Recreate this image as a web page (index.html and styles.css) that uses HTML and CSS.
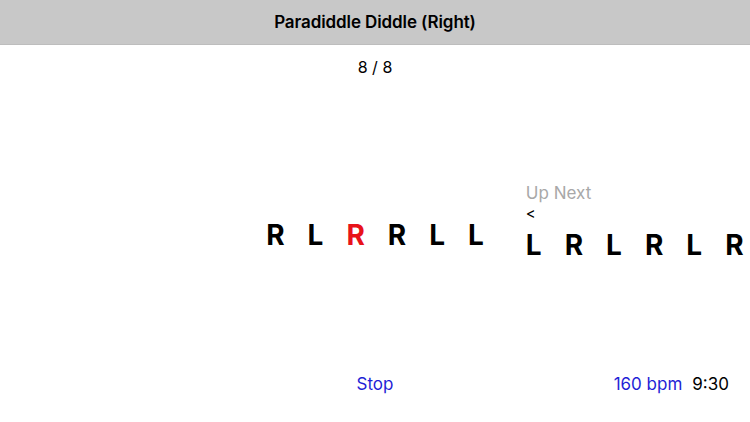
FILE: index.html
```html
<!DOCTYPE html>
<html>
<head>
<meta charset="utf-8">
<link rel="stylesheet" href="styles.css">
</head>
<body>
<div class="app">
  <header class="bar"><span class="title">Paradiddle Diddle (Right)</span></header>
  <div class="counter">8 / 8</div>
  <main class="stage">
    <div class="spacer"></div>
    <div class="pattern current">
      <span>R</span><span>L</span><span class="hit">R</span><span>R</span><span>L</span><span>L</span>
    </div>
    <div class="next">
      <div class="next-label">Up Next</div>
      <div class="next-arrow">&lt;</div>
      <div class="pattern">
        <span>L</span><span>R</span><span>L</span><span>R</span><span>L</span><span>R</span>
      </div>
    </div>
  </main>
  <footer class="footer">
    <div class="spacer"></div>
    <button class="link stop">Stop</button>
    <div class="status">
      <span class="link">160 bpm</span>
      <span class="time">9:30</span>
    </div>
  </footer>
</div>
</body>
</html>
```

FILE: styles.css
```css
html, body {
  margin: 0;
  padding: 0;
  background: #fff;
}
body {
  font-family: Inter, "Noto Sans", "Liberation Sans", sans-serif;
  color: #000;
}
.app {
  width: 750px;
  height: 422px;
  display: flex;
  flex-direction: column;
  overflow: hidden;
}
.bar {
  height: 45px;
  background: #c8c8c8;
  border-bottom: 1px solid #bdbdbd;
  box-sizing: border-box;
  display: flex;
  align-items: center;
  justify-content: center;
}
.title {
  font-size: 17px;
  font-weight: 600;
  letter-spacing: -0.1px;
}
.counter {
  height: 44px;
  line-height: 44px;
  text-align: center;
  font-size: 16px;
}
.stage {
  flex: 1;
  padding-top: 19px;
  display: grid;
  grid-template-columns: 1fr auto 1fr;
  align-items: center;
}
.pattern {
  display: flex;
  gap: 23px;
  font-size: 28px;
  font-weight: 700;
  line-height: 34px;
}
.hit {
  color: #e8131a;
}
.next {
  justify-self: start;
  padding-left: 42px;
  margin-bottom: 22px;
  display: flex;
  flex-direction: column;
}
.next-label {
  color: #a8a8a8;
  font-size: 17px;
  line-height: 20px;
}
.next-arrow {
  font-size: 15px;
  line-height: 22px;
}
.next .pattern {
  line-height: 40px;
}
.footer {
  height: 44px;
  margin-bottom: 16px;
  display: grid;
  grid-template-columns: 1fr auto 1fr;
  align-items: center;
  font-size: 17px;
}
.link {
  color: #1f1fd6;
}
button.link {
  font: inherit;
  background: none;
  border: 0;
  padding: 0;
  cursor: pointer;
}
.status {
  justify-self: end;
  padding-right: 21px;
  display: flex;
  gap: 10px;
}
```
